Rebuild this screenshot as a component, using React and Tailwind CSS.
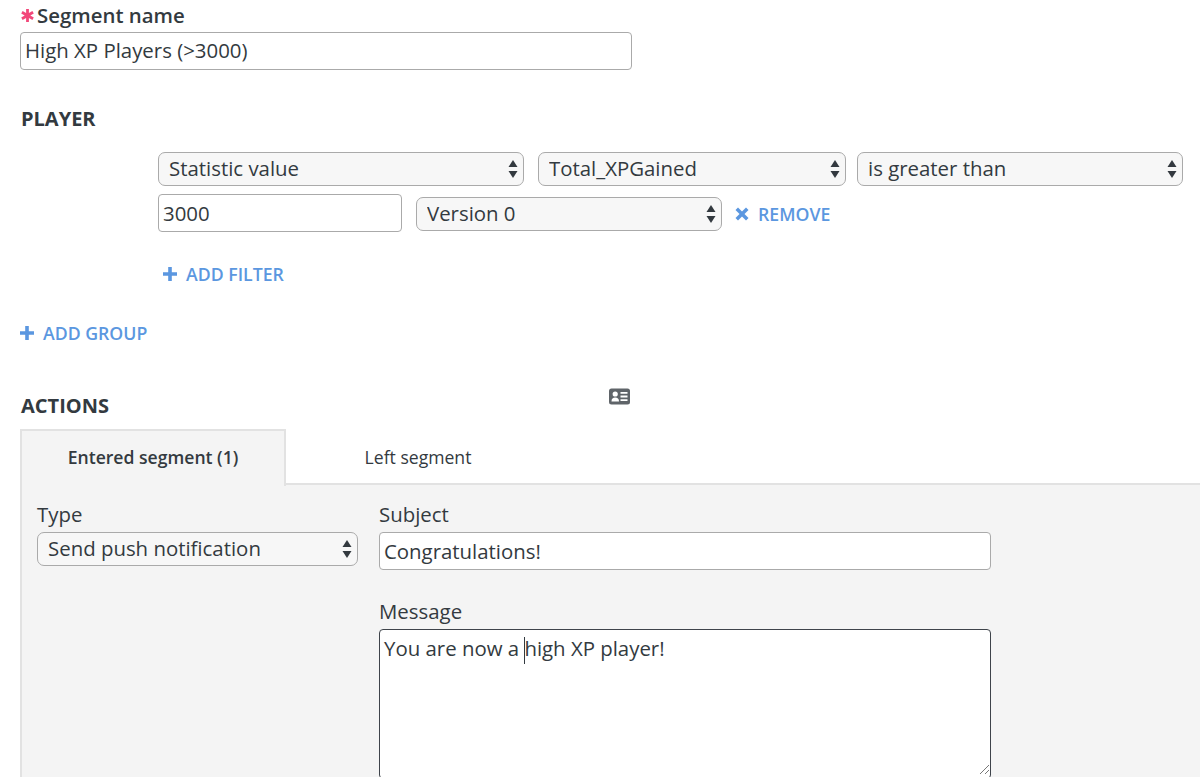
import React from 'react';

const SelectBox = ({ value, className }) => (
    <div className={`relative ${className}`}>
        <select
            defaultValue={value}
            className="w-full h-[34px] appearance-none rounded-[7px] border border-[#aaaaaa] bg-[#f7f7f7] pl-[10px] pr-6 pb-[2px] text-[20.4px] text-[#333a40] outline-none"
        >
            <option>{value}</option>
        </select>
        <svg className="absolute right-[6px] top-[8px] pointer-events-none" width="10" height="18" viewBox="0 0 10 18" fill="#33393f">
            <path d="M5 0 L9.5 7 H0.5 Z" />
            <path d="M0.5 11 H9.5 L5 18 Z" />
        </svg>
    </div>
);

const LinkAction = ({ label, className }) => (
    <button className={`flex items-center gap-[9px] text-[17.7px] font-semibold text-[#5b97e0] ${className}`}>
        <svg width="14" height="14" viewBox="0 0 14 14" fill="#5b97e0">
            <path d="M5.2 0 H8.8 V5.2 H14 V8.8 H8.8 V14 H5.2 V8.8 H0 V5.2 H5.2 Z" />
        </svg>
        {label}
    </button>
);

const App = () => {
    return (
        <div className="w-[1200px] h-[777px] overflow-hidden bg-white text-[#333a40] font-['Open_Sans',sans-serif]">
            <div className="pl-5 pt-[2px]">
                <label className="flex items-center h-[26px] text-[20.4px] font-semibold">
                    <svg className="ml-[1px] mr-[3px]" width="13" height="13" viewBox="0 0 13 13" fill="#f2487a">
                        <path d="M5.1 0 H7.9 V4 L11.4 2 L12.8 4.4 L9.3 6.5 L12.8 8.6 L11.4 11 L7.9 9 V13 H5.1 V9 L1.6 11 L0.2 8.6 L3.7 6.5 L0.2 4.4 L1.6 2 L5.1 4 Z" />
                    </svg>
                    Segment name
                </label>
                <input
                    defaultValue="High XP Players (>3000)"
                    className="block mt-1 w-[612px] h-[38px] rounded-[4px] border border-[#aaaaaa] bg-white px-[4px] pb-[2px] text-[20.4px] text-[#333a40] outline-none"
                />

                <h2 className="mt-[36px] h-[26px] pl-[1px] leading-[26px] text-[20px] font-bold">PLAYER</h2>

                <div className="mt-[20px] pl-[138px]">
                    <div className="flex">
                        <SelectBox value="Statistic value" className="w-[366px]" />
                        <SelectBox value="Total_XPGained" className="ml-[14px] w-[308px]" />
                        <SelectBox value="is greater than" className="ml-[11px] w-[326px]" />
                    </div>
                    <div className="flex items-center mt-2">
                        <input
                            defaultValue="3000"
                            className="w-[244px] h-[38px] rounded-[4px] border border-[#aaaaaa] bg-white px-[4px] text-[20.4px] text-[#333a40] outline-none"
                        />
                        <SelectBox value="Version 0" className="ml-[14px] w-[306px] translate-y-[1px]" />
                        <button className="ml-[13px] flex items-center gap-[9px] translate-y-[1px] text-[17.7px] font-semibold text-[#5b97e0]">
                            <svg width="14" height="14" viewBox="0 0 14 14" fill="#5b97e0">
                                <path d="M3 0.5 L7 4.5 L11 0.5 L13.5 3 L9.5 7 L13.5 11 L11 13.5 L7 9.5 L3 13.5 L0.5 11 L4.5 7 L0.5 3 Z" />
                            </svg>
                            REMOVE
                        </button>
                    </div>
                    <LinkAction label="ADD FILTER" className="mt-[30px] ml-[5px] h-[24px]" />
                </div>

                <LinkAction label="ADD GROUP" className="mt-[35px] h-[24px]" />

                <div className="relative mt-[48px] h-[26px]">
                    <h2 className="pl-[1px] leading-[26px] text-[20px] font-bold">ACTIONS</h2>
                    <svg className="absolute left-[589px] top-[-5px]" width="21" height="17" viewBox="0 0 21 17">
                        <rect width="21" height="16" y="0.5" rx="2.5" fill="#5f6469" />
                        <circle cx="6.2" cy="6" r="2.6" fill="#fff" />
                        <path d="M2.5 13.5 C2.5 10.5 4 9.5 6.2 9.5 C8.4 9.5 10 10.5 10 13.5 Z" fill="#fff" />
                        <path d="M11.5 4 H18.5 V5.8 H11.5 Z M11.5 7.6 H18.5 V9.4 H11.5 Z M11.5 11.2 H18.5 V13 H11.5 Z" fill="#fff" />
                    </svg>
                </div>

                <div className="mt-[10px] flex h-[56px]">
                    <div className="w-[266px] border-t-2 border-x-2 border-[#e2e2e2] bg-[#f4f4f4] flex items-center justify-center pb-[2px] text-[17.6px] font-semibold -mb-[1px] z-10">
                        Entered segment (1)
                    </div>
                    <div className="flex-1 border-b-2 border-[#e2e2e2] text-[17.6px]">
                        <span className="block w-[264px] pt-[15px] text-center">Left segment</span>
                    </div>
                </div>

                <div className="flex h-[300px] border-l-2 border-[#e2e2e2] bg-[#f4f4f4] pl-[15px]">
                    <div className="w-[321px]">
                        <label className="block mt-[14px] h-[30px] leading-[30px] text-[20.4px]">Type</label>
                        <SelectBox value="Send push notification" className="mt-[3px]" />
                    </div>
                    <div className="ml-[21px] w-[612px]">
                        <label className="block mt-[14px] h-[30px] leading-[30px] text-[20.4px]">Subject</label>
                        <input
                            defaultValue="Congratulations!"
                            className="block mt-[3px] w-full h-[38px] rounded-[4px] border border-[#aaaaaa] bg-white px-[4px] text-[20.4px] text-[#333a40] outline-none"
                        />
                        <label className="block mt-[26px] h-[30px] leading-[30px] text-[20.4px]">Message</label>
                        <div className="relative mt-[3px] h-[150px] rounded-[4px] border border-[#3e434a] bg-white px-[4px] pt-[3px] text-[20.4px] leading-[30px]">
                            You are now a <span className="inline-block w-[1px] h-[27px] -mx-[0.5px] align-middle bg-[#333a40]"></span>high XP player!
                            <svg className="absolute right-[0px] bottom-[3px]" width="12" height="12" viewBox="0 0 12 12" stroke="#777" fill="none">
                                <path d="M2 11 L11 2 M7 11 L11 7" />
                            </svg>
                        </div>
                    </div>
                </div>
            </div>
        </div>
    );
};

export default App;
